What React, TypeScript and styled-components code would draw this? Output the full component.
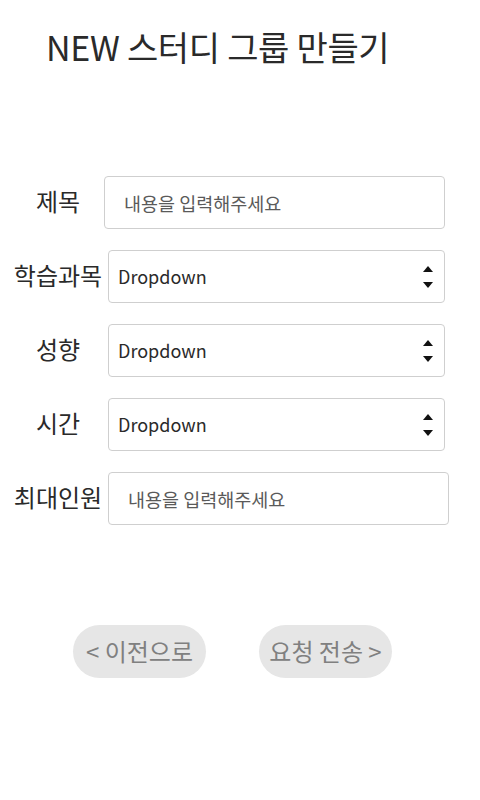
import styled, { createGlobalStyle } from 'styled-components';

const GlobalStyle = createGlobalStyle`
  * {
    box-sizing: border-box;
  }
  body {
    margin: 0;
    background: #ffffff;
    font-family: 'Noto Sans CJK KR', 'Noto Sans', sans-serif;
  }
`;

interface Field {
  label: string;
  kind: 'input' | 'select';
  nudge?: number;
}

const fields: Field[] = [
  { label: '제목', kind: 'input', nudge: -4 },
  { label: '학습과목', kind: 'select' },
  { label: '성향', kind: 'select' },
  { label: '시간', kind: 'select' },
  { label: '최대인원', kind: 'input' },
];

function UpDownArrows() {
  return (
    <svg width="10" height="22" viewBox="0 0 10 22">
      <path d="M5 0 L10 6 L0 6 Z" fill="#111" />
      <path d="M0 16 L10 16 L5 22 Z" fill="#111" />
    </svg>
  );
}

export default function App() {
  return (
    <Page>
      <GlobalStyle />
      <Title>NEW 스터디 그룹 만들기</Title>
      <Form>
        {fields.map((f) => (
          <Row key={f.label}>
            <Label>{f.label}</Label>
            {f.kind === 'input' ? (
              <TextBox $nudge={f.nudge ?? 0} placeholder="내용을 입력해주세요" />
            ) : (
              <SelectBox>
                <span>Dropdown</span>
                <UpDownArrows />
              </SelectBox>
            )}
          </Row>
        ))}
      </Form>
      <Buttons>
        <PillButton>&lt; 이전으로</PillButton>
        <PillButton>요청 전송 &gt;</PillButton>
      </Buttons>
    </Page>
  );
}

const Page = styled.div`
  width: 480px;
  height: 800px;
  padding-top: 24px;
  display: flex;
  flex-direction: column;
`;

const Title = styled.h1`
  margin: 0 0 0 46px;
  color: #2a2a2a;
  font-size: 34px;
  font-weight: 400;
  line-height: 46px;
  letter-spacing: -0.3px;
`;

const Form = styled.div`
  margin-top: 106px;
  display: flex;
  flex-direction: column;
  gap: 21px;
`;

const Row = styled.div`
  display: grid;
  grid-template-columns: 96px auto;
  column-gap: 2px;
  align-items: center;
  padding-left: 10px;
`;

const Label = styled.div`
  text-align: center;
  color: #2a2a2a;
  font-size: 24px;
  line-height: 32px;
  margin-bottom: 4px;
  white-space: nowrap;
`;

const TextBox = styled.input<{ $nudge: number }>`
  width: 341px;
  height: 53px;
  margin-left: ${({ $nudge }) => $nudge}px;
  padding: 0 0 0 19px;
  border: 1px solid #cfcfcf;
  border-radius: 4px;
  background: #fff;
  font-family: 'Noto Sans CJK KR', 'Noto Sans', sans-serif;
  font-size: 18.5px;
  color: #333;
  outline: none;

  &::placeholder {
    color: #5a5a5a;
  }
`;

const SelectBox = styled.div`
  width: 337px;
  height: 53px;
  padding: 0 11px 0 9px;
  display: flex;
  align-items: center;
  justify-content: space-between;
  border: 1px solid #cfcfcf;
  border-radius: 4px;
  background: #fff;
  color: #2a2a2a;
  font-size: 18px;

  > span {
    padding-bottom: 1px;
  }
`;

const Buttons = styled.div`
  margin-top: 100px;
  padding-left: 73px;
  display: flex;
  gap: 53px;
`;

const PillButton = styled.button`
  width: 133px;
  height: 53px;
  border: none;
  border-radius: 27px;
  background: #e6e6e6;
  color: #808080;
  font-family: 'Noto Sans CJK KR', 'Noto Sans', sans-serif;
  font-size: 24px;
  padding: 0 0 2px;
`;
